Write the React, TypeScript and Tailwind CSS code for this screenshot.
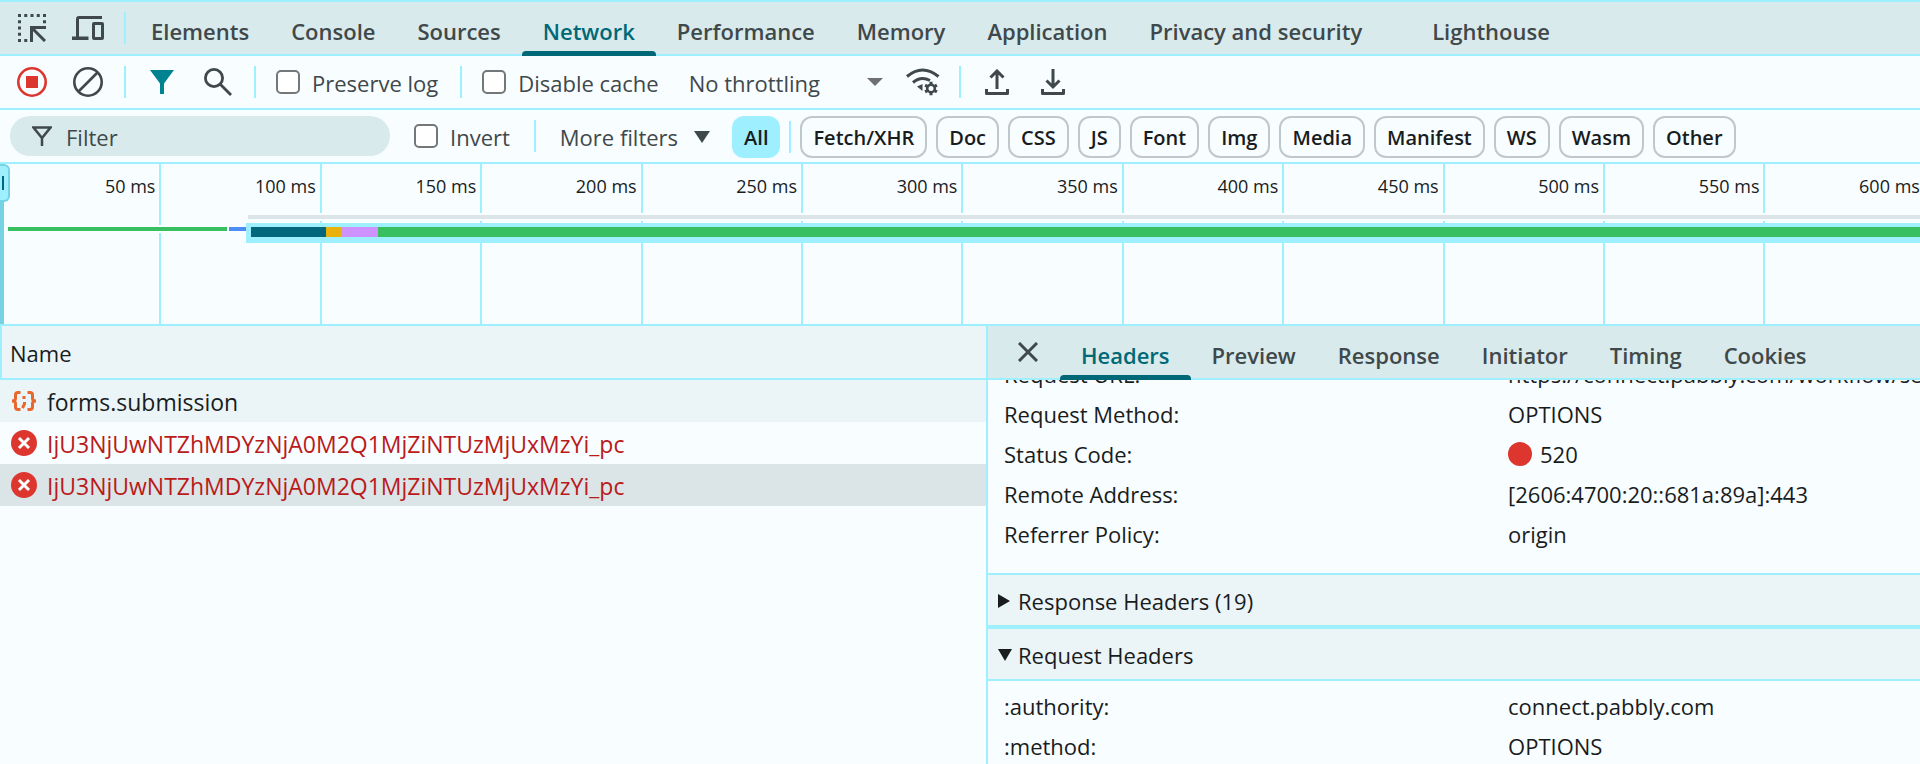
import { useState } from 'react'
import type { ReactNode } from 'react'

const TABS = ['Elements', 'Console', 'Sources', 'Network', 'Performance', 'Memory', 'Application', 'Privacy and security']

const TYPES = ['Fetch/XHR', 'Doc', 'CSS', 'JS', 'Font', 'Img', 'Media', 'Manifest', 'WS', 'Wasm', 'Other']

const TICKS = [50, 100, 150, 200, 250, 300, 350, 400, 450, 500, 550, 600]

const REQUESTS = [
  { id: 1, name: 'forms.submission', failed: false },
  { id: 2, name: 'IjU3NjUwNTZhMDYzNjA0M2Q1MjZiNTUzMjUxMzYi_pc', failed: true },
  { id: 3, name: 'IjU3NjUwNTZhMDYzNjA0M2Q1MjZiNTUzMjUxMzYi_pc', failed: true },
]

const DETAIL_TABS = ['Headers', 'Preview', 'Response', 'Initiator', 'Timing', 'Cookies']

const GENERAL = [
  { label: 'Request URL:', value: 'https://connect.pabbly.com/workflow/sendwebhookdata' },
  { label: 'Request Method:', value: 'OPTIONS' },
  { label: 'Status Code:', value: '520', dot: true },
  { label: 'Remote Address:', value: '[2606:4700:20::681a:89a]:443' },
  { label: 'Referrer Policy:', value: 'origin' },
]

const REQUEST_HEADERS = [
  { label: ':authority:', value: 'connect.pabbly.com' },
  { label: ':method:', value: 'OPTIONS' },
]

function Separator() {
  return <div className="w-0.5 h-8 bg-[#9eefff] flex-shrink-0" />
}

function Tab({ label, active, onClick }: { label: string; active: boolean; onClick: () => void }) {
  return (
    <button
      onClick={onClick}
      className={`relative h-full px-[21px] pt-1.5 font-semibold whitespace-nowrap ${active ? 'text-[#006876]' : 'text-[#3f484a]'}`}
    >
      {label}
      {active && <span className="absolute left-0 right-0 -bottom-0.5 h-[5px] rounded-t bg-[#006876]" />}
    </button>
  )
}

function Check({ id, label }: { id: string; label: string }) {
  return (
    <label htmlFor={id} className="flex items-center gap-3 whitespace-nowrap text-[#3f484a]">
      <input
        id={id}
        type="checkbox"
        className="appearance-none w-6 h-6 rounded-[5px] border-2 border-[#747778] bg-white checked:bg-[#006876]"
      />
      <span className="pt-0.5">{label}</span>
    </label>
  )
}

function IconButton({ label, children }: { label: string; children: ReactNode }) {
  return (
    <button aria-label={label} className="w-14 h-full flex items-center justify-center flex-shrink-0 text-[#3f484a]">
      {children}
    </button>
  )
}

function Fields({ rows }: { rows: { label: string; value: string; dot?: boolean }[] }) {
  return (
    <dl>
      {rows.map(r => (
        <div key={r.label} className="flex h-10 items-center pl-4 whitespace-nowrap">
          <dt className="w-[504px] flex-shrink-0">{r.label}</dt>
          <dd className="flex items-center gap-2">
            {r.dot && <span className="w-6 h-6 rounded-full bg-[#dc362e]" />}
            {r.value}
          </dd>
        </div>
      ))}
    </dl>
  )
}

function Section({ title, open }: { title: string; open: boolean }) {
  return (
    <button className="w-full h-[54px] flex items-center gap-1.5 pl-2.5 pt-0.5 border-y-2 border-[#9eefff] bg-[#ebf4f7]">
      <svg width="14" height="14" viewBox="0 0 14 14" fill="currentColor">
        {open ? <path d="M0 1h14L7 13z" /> : <path d="M0 0v14l12-7z" />}
      </svg>
      {title}
    </button>
  )
}

export default function App() {
  const [tab, setTab] = useState('Network')
  const [type, setType] = useState('All')
  const [selected, setSelected] = useState(3)
  const [detailTab, setDetailTab] = useState('Headers')

  return (
    <div className="h-screen flex flex-col overflow-hidden bg-[#f8fdff] text-[#191c1d] text-[22px] leading-[30px] font-['Open_Sans',sans-serif]">
      <nav className="h-14 flex items-center flex-shrink-0 border-y-2 border-[#9eefff] bg-[#d9eaec]">
        <div className="w-1 flex-shrink-0" />
        <IconButton label="Inspect element">
          <svg width="28" height="28" viewBox="0 0 28 28" fill="none" stroke="currentColor" strokeWidth="3">
            <path d="M1.5 0v28M0 1.5h28M26.500 0v10M0 26.500h10" strokeDasharray="3 3.25" />
            <path d="M13.500 28V13.500H28M14 14l13 13" />
          </svg>
        </IconButton>
        <IconButton label="Toggle device toolbar">
          <svg width="32" height="24" viewBox="0 0 32 24" fill="none" stroke="currentColor" strokeWidth="3">
            <path d="M30 1.500H7Q5.500 1.500 5.500 3v18" />
            <path d="M0 22.250h16.500" strokeWidth="3.500" />
            <rect x="21.500" y="7.500" width="9" height="15" rx="0.500" />
          </svg>
        </IconButton>
        <div className="w-2" />
        <Separator />
        <div className="w-1" />
        {TABS.map(t => (
          <Tab key={t} label={t} active={tab === t} onClick={() => setTab(t)} />
        ))}
        <div className="w-7" />
        <Tab label="Lighthouse" active={tab === 'Lighthouse'} onClick={() => setTab('Lighthouse')} />
      </nav>

      <div className="h-[54px] flex items-center flex-shrink-0 border-b-2 border-[#9eefff]">
        <div className="w-1 flex-shrink-0" />
        <IconButton label="Stop recording">
          <svg width="30" height="30" viewBox="0 0 30 30" fill="none" className="text-[#dc362e]">
            <circle cx="15" cy="15" r="13.700" stroke="currentColor" strokeWidth="2.600" />
            <rect x="9" y="9" width="12" height="12" fill="currentColor" />
          </svg>
        </IconButton>
        <IconButton label="Clear">
          <svg width="30" height="30" viewBox="0 0 30 30" fill="none" stroke="currentColor" strokeWidth="2.600">
            <circle cx="15" cy="15" r="13.700" />
            <path d="M24.500 5.500l-19 19" />
          </svg>
        </IconButton>
        <div className="w-2" />
        <Separator />
        <div className="w-2" />
        <IconButton label="Filter">
          <svg width="24" height="24" viewBox="0 0 24 24" fill="#008391">
            <path d="M0 0h24L14 13.500V24h-4V13.500z" />
          </svg>
        </IconButton>
        <IconButton label="Search">
          <svg width="28" height="28" viewBox="0 0 28 28" fill="none" stroke="currentColor" strokeWidth="2.800">
            <circle cx="10" cy="10" r="8.600" />
            <path d="M16 16l11 11" />
          </svg>
        </IconButton>
        <div className="w-2" />
        <Separator />
        <div className="pl-5 pr-[22px]">
          <Check id="preserve" label="Preserve log" />
        </div>
        <Separator />
        <div className="pl-5 pr-6">
          <Check id="cache" label="Disable cache" />
        </div>
        <div className="relative flex items-center">
          <select
            aria-label="Throttling"
            className="appearance-none w-[212px] pl-1.5 pt-0.5 bg-transparent text-[#3f484a]"
          >
            <option>No throttling</option>
          </select>
          <svg width="16" height="8" viewBox="0 0 16 8" className="absolute right-3 fill-[#6f7071]">
            <path d="M0 0h16L8 8z" />
          </svg>
        </div>
        <IconButton label="Network conditions">
          <svg width="34" height="28" viewBox="0 0 34 28" fill="none" stroke="currentColor" strokeWidth="3">
            <path d="M1 8.500Q16.500-4.500 32.500 8.500M7 14.500Q15 7.500 24 12.500" />
            <path d="M11 18.500l5.500-2.500v7z" fill="currentColor" stroke="none" />
            <circle cx="25" cy="20.500" r="3.800" strokeWidth="2.600" />
            <path d="M25 13.700v3M25 24.300v3M19.100 17.100l2.600 1.500M28.300 22.400l2.600 1.500M30.900 17.100l-2.600 1.500M21.700 22.400l-2.600 1.500" />
          </svg>
        </IconButton>
        <div className="w-2" />
        <Separator />
        <div className="w-2" />
        <IconButton label="Import HAR">
          <svg width="24" height="26" viewBox="0 0 24 26" fill="none" stroke="currentColor" strokeWidth="3">
            <path d="M12 20V2M5.500 8.500L12 2l6.500 6.500" />
            <path d="M1.500 20v4.500h21V20" strokeLinejoin="round" />
          </svg>
        </IconButton>
        <IconButton label="Export HAR">
          <svg width="24" height="26" viewBox="0 0 24 26" fill="none" stroke="currentColor" strokeWidth="3">
            <path d="M12 0v18M5.500 11.500L12 18l6.500-6.500" />
            <path d="M1.500 20v4.500h21V20" strokeLinejoin="round" />
          </svg>
        </IconButton>
      </div>

      <div className="h-[54px] flex items-center flex-shrink-0 border-b-2 border-[#9eefff]">
        <label className="ml-2.5 w-[380px] h-10 flex items-center gap-3.5 pl-[22px] rounded-full bg-[#d9eaec] text-[#3f484a]">
          <svg width="20" height="20" viewBox="0 0 20 20" fill="none" stroke="currentColor" strokeWidth="2.500">
            <path d="M1.500 1.500h17L10 12zM10 10v10" />
          </svg>
          <input placeholder="Filter" aria-label="Filter" className="w-72 pt-0.5 bg-transparent outline-none placeholder:text-[#3f484a]" />
        </label>
        <div className="px-6">
          <Check id="invert" label="Invert" />
        </div>
        <Separator />
        <button className="flex items-center gap-4 pl-6 pr-[22px] pt-0.5 whitespace-nowrap text-[#3f484a]">
          More filters
          <svg width="16" height="12" viewBox="0 0 16 12" fill="currentColor">
            <path d="M0 0h16L8 12z" />
          </svg>
        </button>
        <div className="flex items-center gap-[9px] pt-0.5 font-semibold text-xl">
          <button
            onClick={() => setType('All')}
            className={`h-[42px] px-3 pt-0.5 rounded-xl ${type === 'All' ? 'bg-[#9eefff]' : ''}`}
          >
            All
          </button>
          <Separator />
          {TYPES.map(t => (
            <button
              key={t}
              onClick={() => setType(t)}
              className={`h-[42px] px-[11px] pt-0.5 rounded-xl border-2 border-[#bfc8ca] ${type === t ? 'bg-[#9eefff]' : ''}`}
            >
              {t}
            </button>
          ))}
        </div>
      </div>

      <div className="relative h-[162px] flex flex-shrink-0 overflow-hidden border-b-2 border-[#9eefff]">
        <div className="w-px flex-shrink-0" />
        {TICKS.map(t => (
          <div key={t} className="w-[8.355%] flex-shrink-0 pt-2 pr-1 border-r-2 border-[#9eefff] text-right text-lg whitespace-nowrap">
            {t} ms
          </div>
        ))}
        {/* overview bars, drawn over the grid */}
        <div className="absolute left-[248px] right-0 top-[49px] h-2 bg-[#dbe4e7] border-y-2 border-[#f8fdff]" />
        <div className="absolute left-2 top-[61px] w-[238px] h-2 flex gap-0.5 border-y-2 border-[#f8fdff] bg-[#f8fdff]">
          <div className="w-[219px] bg-[#38bf5f]" />
          <div className="flex-1 bg-[#4c8df6]" />
        </div>
        <div className="absolute left-[246px] right-0 top-[59px] h-5 flex pl-[5px] pt-1 pb-1.5 bg-[#9eefff]">
          <div className="w-[75px] bg-[#00677d]" />
          <div className="w-[15px] bg-[#e8b10c]" />
          <div className="w-[37px] bg-[#cf93ff]" />
          <div className="flex-1 bg-[#38bf5f]" />
        </div>
        <div className="absolute left-0 inset-y-0 w-1 bg-[#76d2e5]" />
        <div className="absolute left-0 top-0 w-2.5 h-[38px] flex items-center pl-0.5 rounded-r-md border-2 border-l-0 border-[#76d2e5] bg-[#9eefff]">
          <div className="w-0.5 h-3.5 bg-[#00677d]" />
        </div>
      </div>

      <div className="flex-1 min-h-0 flex">
        <div className="w-[51.46%] flex-shrink-0 border-r-2 border-[#9eefff]">
          <table className="w-full border-separate border-spacing-0">
            <thead>
              <tr className="h-[54px] bg-[#ebf4f7]">
                <th className="border-l-2 border-b-2 border-[#9eefff] px-2 pt-0.5 pb-0 text-left font-normal">Name</th>
              </tr>
            </thead>
            <tbody className="text-[23px]">
              {REQUESTS.map((r, i) => (
                <tr
                  key={r.id}
                  onClick={() => setSelected(r.id)}
                  className={`h-[42px] ${selected === r.id ? 'bg-[#dbe4e7]' : i % 2 === 0 ? 'bg-[#ebf4f7]' : ''}`}
                >
                  <td className={`py-0 pr-0 pl-[11px] ${r.failed ? 'text-[#ba1a1a]' : ''}`}>
                    <div className="flex items-center gap-2.5">
                      {r.failed ? (
                        <svg width="26" height="26" viewBox="0 0 26 26">
                          <circle cx="13" cy="13" r="13" fill="#dc362e" />
                          <path d="M8 8l10 10M18 8L8 18" stroke="#fff" strokeWidth="3" />
                        </svg>
                      ) : (
                        <svg width="26" height="20" viewBox="0 0 26 20" fill="none" stroke="#e8672c" strokeWidth="3">
                          <path d="M9.500 1.500H7Q4.500 1.500 4.500 4v3.500Q4.500 10 1 10q3.500 0 3.500 2.500V16q0 2.500 2.500 2.500h2.500" />
                          <path d="M16.500 1.500H19q2.500 0 2.500 2.500v3.500Q21.500 10 25 10q-3.500 0-3.500 2.500V16q0 2.500-2.500 2.500h-2.500" />
                          <path d="M13 5v3M13.500 11v2l-2 4" />
                        </svg>
                      )}
                      <span className="pt-0.5">{r.name}</span>
                    </div>
                  </td>
                </tr>
              ))}
            </tbody>
          </table>
        </div>

        <div className="flex-1 min-w-0 flex flex-col">
          <div className="relative z-10 h-[54px] flex items-center flex-shrink-0 pl-3 border-b-2 border-[#9eefff] bg-[#d9eaec]">
            <button aria-label="Close" className="w-14 mr-1 h-full flex items-center justify-center text-[#3f484a]">
              <svg width="20" height="20" viewBox="0 0 20 20" fill="none" stroke="currentColor" strokeWidth="3">
                <path d="M1 1l18 18M19 1L1 19" />
              </svg>
            </button>
            {DETAIL_TABS.map(t => (
              <Tab key={t} label={t} active={detailTab === t} onClick={() => setDetailTab(t)} />
            ))}
          </div>
          <div className="flex-1 min-h-0 overflow-hidden">
            <div className="-mt-[26px] pb-[19px]">
              <Fields rows={GENERAL} />
            </div>
            <Section title="Response Headers (19)" open={false} />
            <Section title="Request Headers" open />
            <div className="pt-[5px]">
              <Fields rows={REQUEST_HEADERS} />
            </div>
          </div>
        </div>
      </div>
    </div>
  )
}
